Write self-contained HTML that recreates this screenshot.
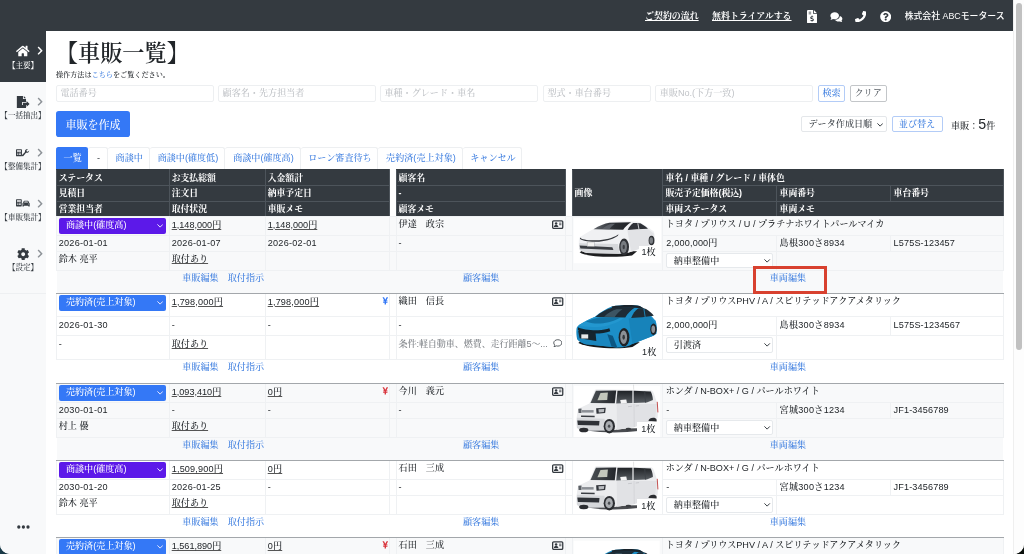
<!DOCTYPE html><html lang="ja"><head><meta charset="utf-8"><title>車販一覧</title><style>
*{box-sizing:border-box;margin:0;padding:0}
html,body{width:1024px;height:554px;overflow:hidden;background:linear-gradient(to right,#1a3b49 0,#0d1a1c 40px,#0b100c 100%)}
body{font-family:"Liberation Sans","Noto Serif CJK SC",serif;color:#212529;font-size:9.1px;line-height:1.5;position:relative;font-weight:500}
#win{position:absolute;left:0;top:0;width:1024px;height:554px;background:#fff;border-radius:0 0 10px 10px;overflow:hidden;will-change:transform}
#topbar{position:absolute;left:0;top:0;width:1013.3px;height:30.6px;background:#343a40}
#topbar a{position:absolute;top:9px;line-height:14px;color:#fff;font-weight:700;text-decoration:underline;text-decoration-thickness:.7px;text-underline-offset:1px;white-space:nowrap;font-size:8.95px}
#topbar .co{position:absolute;top:9px;line-height:14px;color:#fff;font-family:"Liberation Sans","Noto Sans CJK JP",sans-serif;font-size:8.85px;white-space:nowrap}
#topbar svg{position:absolute;fill:#fff}
#side{position:absolute;left:0;top:30.6px;width:46px;height:523px;background:#f8f9fa}
#side .it{position:absolute;left:0;width:46px;height:51px;text-align:center;color:#343a40}
#side .it.act{background:#343a40;color:#fff}
#side .it svg{position:absolute;fill:currentColor}
#side .it svg.ch{fill:#8d9297}
#side .it.act svg.ch{fill:#fff}
#side .it .lb{position:absolute;left:-10px;width:66px;text-align:center;font-size:7.55px;line-height:10px;white-space:nowrap}
#sb{position:absolute;left:1013.3px;top:0;width:10.7px;height:554px;background:#fdfdfd;border-left:1px solid #efefef}
#sb i{position:absolute;left:2px;top:2.5px;width:5.9px;height:347.5px;border-radius:3.2px;background:#c1c1c1}
h1{position:absolute;left:55.8px;top:37.4px;font-size:22.2px;font-weight:600;line-height:34px;white-space:nowrap;color:#212529}
.sub{position:absolute;left:56px;top:69.7px;font-size:7.13px;line-height:11px;white-space:nowrap;font-weight:500}
.sub a{color:#3f7fe0;text-decoration:none}
.inp{position:absolute;top:85.1px;height:17.1px;border:1px solid #edeff1;border-radius:2px;background:#fff;font-size:9.1px;line-height:14.8px;color:#c0c3c7;padding-left:3.4px;white-space:nowrap;overflow:hidden}
.btn{position:absolute;border-radius:2px;text-align:center;white-space:nowrap}
.tabs{position:absolute;left:56px;top:147px;height:22.5px;display:flex}
.tabs div{height:22.5px;line-height:20.2px;padding:0 0 0 2.4px;color:#3f7fe0;border:1px solid #edeff1;border-bottom:none;border-left:none;border-radius:2.5px 2.5px 0 0;text-align:center;font-size:9.1px;white-space:nowrap}
.tabs div.act{background:#3478f6;color:#fff;border-color:#3478f6}
table{position:absolute;left:56px;top:169px;width:947px;border-collapse:collapse;table-layout:fixed;font-size:9.1px;font-weight:500}
td,th{padding:0 1.7px;white-space:nowrap;overflow:hidden;text-align:left;vertical-align:top;line-height:13.6px}
thead th{font-size:8.85px;background:#343a40;color:#fff;font-weight:700;border:1px solid #4d545b;height:15.5px;line-height:14px;vertical-align:middle}
thead th.gap{background:#fff;border:none}
thead tr:first-child th{border-top-color:#343a40;height:16px}
tbody td{border:1px solid #eff1f3}
tbody.o td{background:#f8f9fa}
tbody.e td{background:#fff}
tbody tr.r1 td{border-top:1px solid #a3a7ab}
tbody tr.r4 td{border-bottom:1px solid #a3a7ab}
.n{letter-spacing:.27px}
.cn{letter-spacing:0}
tbody.first tr.r1 td{border-top-color:#eff1f3}
thead tr:last-child th,thead th[rowspan]{border-bottom-color:#eff1f3}
tbody td.lk{text-align:center;border-left:none;border-right:none;color:#3f7fe0;vertical-align:top;padding-top:1.5px}
tbody td.gapc{border-left:none;border-right:none}
td u{text-decoration:underline;text-decoration-color:#555;text-decoration-thickness:.6px;text-underline-offset:.7px}
.sel{display:block;position:relative;width:107.3px;height:16px;border-radius:2px;color:#fff;line-height:15px;padding-left:7.2px;margin-top:1px;font-weight:500}
.sel svg{position:absolute;right:2.6px;top:6.2px}
.sel2{display:block;position:relative;width:107.4px;height:15.5px;border-radius:2px;color:#212529;background:#fff;border:1px solid #e6e9ec;line-height:14.3px;padding-left:6.8px;margin:0.5px 0 0 3.3px}
.sel2 svg{position:absolute;right:1.8px;top:5px}
.ic{position:absolute}
td.rel{position:relative}
td.imgc{position:relative;padding:0;overflow:visible}
.car{position:absolute;left:-1.5px}
.bd{position:absolute;background:#fff;text-align:center;font-size:9.1px;white-space:nowrap}
.memo{color:#7d8186;letter-spacing:-.13px}
.red{position:absolute;left:752.8px;top:266px;width:74.4px;height:27.8px;border:3.5px solid #d8412f}
</style></head><body><div id="win"><div id="topbar"><a style="left:645px">ご契約の流れ</a><a style="left:712px">無料トライアルする</a><svg style="left:806.500px;top:10px" width="10" height="13.300" viewBox="0 0 12 16"><path fill-rule="evenodd" d="M1.200 0 h6 v3.600 a1.200 1.200 0 0 0 1.200 1.200 h3.600 v10 a1.200 1.200 0 0 1 -1.200 1.200 h-9.600 a1.200 1.200 0 0 1 -1.200 -1.200 v-13.600 a1.200 1.200 0 0 1 1.200 -1.200z M8.200 0 l3.800 3.800 h-3.800z M2 2.200 v0.800 h3 v-0.800z M2 4.200 v0.800 h3 v-0.800z M5.600 6.600 v0.900 c-1 0.100 -1.700 0.800 -1.700 1.700 c0 1 0.800 1.400 1.800 1.700 c0.900 0.300 1.200 0.400 1.200 0.800 c0 0.400 -0.400 0.600 -0.900 0.600 c-0.600 0 -1 -0.200 -1.400 -0.500 l-0.600 0.800 c0.400 0.400 1 0.600 1.600 0.700 v0.900 h0.900 v-0.900 c1.100 -0.200 1.700 -0.800 1.700 -1.700 c0 -1.100 -0.900 -1.500 -1.900 -1.800 c-0.800 -0.200 -1.100 -0.400 -1.100 -0.700 c0 -0.300 0.300 -0.500 0.800 -0.500 c0.400 0 0.800 0.100 1.200 0.400 l0.500 -0.800 c-0.400 -0.300 -0.800 -0.500 -1.200 -0.600 v-0.900z"/></svg><svg style="left:830px;top:11.500px" width="12.500" height="10" viewBox="0 0 20 16"><path d="M7.500 0.500 c3.800 0 6.900 2.500 6.900 5.500 s-3.100 5.500 -6.900 5.500 c-0.900 0 -1.800 -0.100 -2.600 -0.400 c-0.900 0.700 -2.400 1.400 -4.300 1.400 c0.600 -0.600 1.400 -1.700 1.600 -2.800 c-1 -1 -1.600 -2.300 -1.600 -3.700 c0 -3 3.100 -5.500 6.900 -5.500z"/><path d="M15.800 6.200 c2.300 0.700 4 2.500 4 4.600 c0 1.200 -0.500 2.300 -1.400 3.100 c0.200 0.900 0.800 1.800 1.400 2.300 c-1.700 0 -3 -0.600 -3.800 -1.200 c-0.700 0.200 -1.500 0.300 -2.300 0.300 c-2.600 0 -4.800 -1.200 -5.700 -2.900 c4.300 -0.100 7.800 -2.700 7.800 -6.200z"/></svg><svg style="left:854.5px;top:10.8px" width="11.4" height="11.4" viewBox="0 0 512 512" ><path d="M493.4 24.6l-104-24c-11.3-2.6-22.9 3.3-27.5 13.9l-48 112c-4.2 9.8-1.4 21.3 6.9 28l60.6 49.6c-36 76.7-98.900 140.500-177.200 177.200l-49.600-60.600c-6.800-8.300-18.200-11.100-28-6.900l-112 48C3.900 366.500-2 378.100.6 389.400l24 104C27.100 504.200 36.700 512 48 512c256.100 0 464-207.500 464-464 0-11.200-7.700-20.900-18.600-23.400z"/></svg><svg style="left:879.6px;top:10.8px" width="11.4" height="11.4" viewBox="0 0 512 512" ><path d="M504 256c0 136.997-111.043 248-248 248S8 392.997 8 256C8 119.083 119.043 8 256 8s248 111.083 248 248zM262.655 90c-54.497 0-89.255 22.957-116.549 63.758-3.536 5.286-2.353 12.415 2.715 16.258l34.699 26.310c5.205 3.947 12.621 3.008 16.665-2.122 17.864-22.658 30.113-35.797 57.303-35.797 20.429 0 45.698 13.148 45.698 32.958 0 14.976-12.363 22.667-32.534 33.976C247.128 238.528 216 254.941 216 296v4c0 6.627 5.373 12 12 12h56c6.627 0 12-5.373 12-12v-1.333c0-28.462 83.186-29.647 83.186-106.667 0-58.002-60.165-102-116.531-102zM256 338c-25.365 0-46 20.635-46 46 0 25.364 20.635 46 46 46s46-20.636 46-46c0-25.365-20.635-46-46-46z"/></svg><span class="co" style="left:904.700px">株式会社 ABCモータース</span></div><div id="side"><div class="it act" style="top:0px"><svg style="left:16.2px;top:14.6px" width="13.6" height="12.1" viewBox="0 0 576 512" ><path d="M280.37 148.26L96 300.11V464a16 16 0 0 0 16 16l112.06-.29a16 16 0 0 0 15.92-16V368a16 16 0 0 1 16-16h64a16 16 0 0 1 16 16v95.64a16 16 0 0 0 16 16.05L464 480a16 16 0 0 0 16-16V300L295.67 148.26a12.19 12.19 0 0 0-15.3 0zM571.6 251.47L488 182.56V44.05a12 12 0 0 0-12-12h-56a12 12 0 0 0-12 12v72.61L318.47 43a48 48 0 0 0-61 0L4.34 251.47a12 12 0 0 0-1.6 16.9l25.5 31A12 12 0 0 0 45.15 301l235.22-193.74a12.19 12.19 0 0 1 15.3 0L530.9 301a12 12 0 0 0 16.9-1.6l25.5-31a12 12 0 0 0-1.7-16.93z"/></svg><svg class="ch" style="left:36.600px;top:15.900px" width="6.300" height="9.400" viewBox="0 0 320 512"><path d="M285.476 272.971L91.132 467.314c-9.373 9.373-24.569 9.373-33.941 0l-22.667-22.667c-9.357-9.357-9.375-24.522-.04-33.901L188.505 256 34.484 101.255c-9.335-9.379-9.317-24.544.04-33.901l22.667-22.667c9.373-9.373 24.569-9.373 33.941 0L285.475 239.03c9.373 9.372 9.373 24.568.001 33.941z"/></svg><div class="lb" style="top:30px">【主要】</div></div><div class="it" style="top:50.7px"><svg style="left:16.1px;top:14.9px" width="13.6" height="11.900" viewBox="0 0 16 14"><path d="M1 0 h7.200 l0 3.600 h3.600 v3.400 h-4.600 v3.600 h4.600 v3.400 h-10.800z M9.200 0 l2.600 2.600 h-2.600z M8.200 8 h4.300 v-2 l3.500 3.300 -3.500 3.300 v-2 h-4.300z"/></svg><svg class="ch" style="left:36.600px;top:15.900px" width="6.300" height="9.400" viewBox="0 0 320 512"><path d="M285.476 272.971L91.132 467.314c-9.373 9.373-24.569 9.373-33.941 0l-22.667-22.667c-9.357-9.357-9.375-24.522-.04-33.901L188.505 256 34.484 101.255c-9.335-9.379-9.317-24.544.04-33.901l22.667-22.667c9.373-9.373 24.569-9.373 33.941 0L285.475 239.03c9.373 9.372 9.373 24.568.001 33.941z"/></svg><div class="lb" style="top:30px">【一括抽出】</div></div><div class="it" style="top:101.4px"><svg style="left:16.4px;top:17.2px" width="13.400" height="7.500" preserveAspectRatio="none" viewBox="0 0 18 10.700"><path fill-rule="evenodd" d="M0.800 0.500 h6.400 a0.800 0.800 0 0 1 0.800 0.800 v8.400 a0.800 0.800 0 0 1 -0.800 0.800 h-6.400 a0.800 0.800 0 0 1 -0.800 -0.800 v-8.400 a0.800 0.800 0 0 1 0.800 -0.800z M1.300 1.800 v2.200 h5.400 v-2.200z M1.300 5.300 v1 h1.200 v-1z M3.500 5.300 v1 h3.200 v-1z M1.300 7.400 v1 h1.200 v-1z M3.500 7.400 v1 h3.200 v-1z"/><path d="M17.800 2.200 a3.300 3.300 0 0 1 -4.300 3.100 l-3.600 4.600 a1.100 1.100 0 0 1 -1.700 -1.400 l3.900 -4.300 a3.300 3.300 0 0 1 3.800 -4 l-1.900 2 0.400 1.500 1.500 0.400z"/></svg><svg class="ch" style="left:36.600px;top:15.900px" width="6.300" height="9.400" viewBox="0 0 320 512"><path d="M285.476 272.971L91.132 467.314c-9.373 9.373-24.569 9.373-33.941 0l-22.667-22.667c-9.357-9.357-9.375-24.522-.04-33.901L188.505 256 34.484 101.255c-9.335-9.379-9.317-24.544.04-33.901l22.667-22.667c9.373-9.373 24.569-9.373 33.941 0L285.475 239.03c9.373 9.372 9.373 24.568.001 33.941z"/></svg><div class="lb" style="top:30px">【整備集計】</div></div><div class="it" style="top:152.1px"><svg style="left:16.2px;top:16.8px" width="13.700" height="7.700" preserveAspectRatio="none" viewBox="0 0 19 10.900"><path fill-rule="evenodd" d="M0.800 0.500 h6.400 a0.800 0.800 0 0 1 0.800 0.800 v8.400 a0.800 0.800 0 0 1 -0.800 0.800 h-6.400 a0.800 0.800 0 0 1 -0.800 -0.800 v-8.400 a0.800 0.800 0 0 1 0.800 -0.800z M1.300 1.800 v2.200 h5.400 v-2.200z M1.300 5.300 v1 h1.200 v-1z M3.500 5.300 v1 h3.200 v-1z M1.300 7.400 v1 h1.200 v-1z M3.500 7.400 v1 h3.200 v-1z"/><path fill-rule="evenodd" d="M10.600 3.200 a1.200 1.200 0 0 1 1.100 -0.800 h4.600 a1.200 1.200 0 0 1 1.100 0.800 l0.700 2 a1.300 1.300 0 0 1 0.900 1.200 v3.800 a0.500 0.500 0 0 1 -0.500 0.500 h-0.900 a0.500 0.500 0 0 1 -0.500 -0.500 v-0.700 h-6.200 v0.700 a0.500 0.500 0 0 1 -0.500 0.500 h-0.900 a0.500 0.500 0 0 1 -0.500 -0.500 v-3.800 a1.300 1.300 0 0 1 0.900 -1.200z M11.800 3.600 l-0.500 1.500 h5.400 l-0.500 -1.500z M10.900 6.300 a0.700 0.700 0 1 0 0 1.400 a0.700 0.700 0 0 0 0 -1.400z M17.100 6.300 a0.700 0.700 0 1 0 0 1.400 a0.700 0.700 0 0 0 0 -1.400z"/></svg><svg class="ch" style="left:36.600px;top:15.900px" width="6.300" height="9.400" viewBox="0 0 320 512"><path d="M285.476 272.971L91.132 467.314c-9.373 9.373-24.569 9.373-33.941 0l-22.667-22.667c-9.357-9.357-9.375-24.522-.04-33.901L188.505 256 34.484 101.255c-9.335-9.379-9.317-24.544.04-33.901l22.667-22.667c9.373-9.373 24.569-9.373 33.941 0L285.475 239.03c9.373 9.372 9.373 24.568.001 33.941z"/></svg><div class="lb" style="top:30px">【車販集計】</div></div><div class="it" style="top:202.8px"><svg style="left:16.9px;top:14.6px" width="12.4" height="12.4" viewBox="0 0 512 512" ><path d="M487.4 315.7l-42.600-24.600c4.300-23.200 4.300-47 0-70.200l42.600-24.600c4.900-2.800 7.100-8.600 5.500-14-11.100-35.600-30-67.800-54.700-94.600-3.800-4.100-10-5.100-14.800-2.300L380.800 110c-17.900-15.400-38.500-27.300-60.800-35.100V25.800c0-5.600-3.900-10.500-9.400-11.700-36.700-8.200-74.300-7.800-109.200 0-5.500 1.200-9.400 6.100-9.400 11.700V75c-22.200 7.900-42.800 19.800-60.800 35.100L88.700 85.500c-4.900-2.800-11-1.900-14.800 2.300-24.700 26.700-43.600 58.900-54.700 94.600-1.700 5.400.6 11.200 5.500 14L67.300 221c-4.300 23.200-4.300 47 0 70.200l-42.600 24.600c-4.900 2.800-7.100 8.600-5.500 14 11.100 35.600 30 67.800 54.700 94.600 3.800 4.100 10 5.100 14.800 2.300l42.600-24.600c17.900 15.400 38.500 27.300 60.800 35.100v49.200c0 5.600 3.900 10.500 9.400 11.700 36.700 8.200 74.300 7.800 109.200 0 5.500-1.200 9.400-6.100 9.400-11.700v-49.200c22.200-7.900 42.800-19.800 60.800-35.100l42.600 24.600c4.900 2.800 11 1.900 14.800-2.300 24.700-26.700 43.600-58.900 54.700-94.600 1.500-5.500-.7-11.300-5.600-14.100zM256 336c-44.100 0-80-35.900-80-80s35.900-80 80-80 80 35.900 80 80-35.900 80-80 80z"/></svg><svg class="ch" style="left:36.600px;top:15.900px" width="6.300" height="9.400" viewBox="0 0 320 512"><path d="M285.476 272.971L91.132 467.314c-9.373 9.373-24.569 9.373-33.941 0l-22.667-22.667c-9.357-9.357-9.375-24.522-.04-33.901L188.505 256 34.484 101.255c-9.335-9.379-9.317-24.544.04-33.901l22.667-22.667c9.373-9.373 24.569-9.373 33.941 0L285.475 239.03c9.373 9.372 9.373 24.568.001 33.941z"/></svg><div class="lb" style="top:30px">【設定】</div></div><svg style="position:absolute;left:16.500px;top:494px" width="13" height="4" viewBox="0 0 13 4"><circle cx="1.800" cy="2" r="1.650" fill="#343a40"/><circle cx="6.400" cy="2" r="1.650" fill="#343a40"/><circle cx="11" cy="2" r="1.650" fill="#343a40"/></svg><div style="position:absolute;left:0;top:262px;width:46px;height:1px;background:#eef0f2"></div></div><div id="sb"><i></i></div><h1>【車販一覧】</h1><div class="sub">操作方法は<a>こちら</a>をご覧ください。</div><div class="inp" style="left:56px;width:157.5px">電話番号</div><div class="inp" style="left:218.2px;width:158.3px">顧客名・先方担当者</div><div class="inp" style="left:380px;width:158px">車種・グレード・車名</div><div class="inp" style="left:543px;width:107.5px">型式・車台番号</div><div class="inp" style="left:655.3px;width:158.2px">車販No.(下方一致)</div><div class="btn" style="left:817.600px;top:85.200px;width:27.900px;height:16.800px;line-height:14.600px;border:1px solid #b3ccf7;color:#3f7fe0;font-size:9.100px">検索</div><div class="btn" style="left:849.500px;top:85.200px;width:37.200px;height:16.800px;line-height:14.600px;border:1px solid #c3c6c9;color:#60666c;font-size:9.100px">クリア</div><div class="btn" style="left:56px;top:111px;width:74px;height:26.300px;line-height:28.200px;background:#3478f6;color:#fff;font-size:11px;border-radius:2.800px;font-weight:500">車販を作成</div><div class="btn" style="left:801px;top:115.700px;width:85.700px;height:16.700px;line-height:15px;border:1px solid #e4e7ea;color:#343a40;font-size:9.100px;text-align:left;padding-left:6.500px">データ作成日順<span style="position:absolute;right:2.600px;top:0"><svg width="6.300" height="4" viewBox="0 0 14 9"><path d="M1.500 1.500 L7 7 L12.500 1.500" fill="none" stroke="#343a40" stroke-width="2.200" stroke-linecap="round" stroke-linejoin="round"/></svg></span></div><div class="btn" style="left:891.500px;top:115.700px;width:51px;height:16.700px;line-height:15px;border:1px solid #b3ccf7;color:#3f7fe0;font-size:9.100px">並び替え</div><div style="position:absolute;left:951px;top:114px;line-height:20px;white-space:nowrap;font-size:9.100px">車販：<span style="font-size:14.200px">5</span>件</div><div class="tabs"><div style="width:32px" class="act">一覧</div><div style="width:19.5px"><span style="color:#343a40">-</span></div><div style="width:42px">商談中</div><div style="width:75.5px">商談中(確度低)</div><div style="width:75.5px">商談中(確度高)</div><div style="width:77.5px">ローン審査待ち</div><div style="width:84.5px">売約済(売上対象)</div><div style="width:59.5px">キャンセル</div></div><table><colgroup><col style="width:113px"><col style="width:96px"><col style="width:124.4px"><col style="width:6.5px"><col style="width:169.5px"><col style="width:6.5px"><col style="width:89.8px"><col style="width:114.2px"><col style="width:114px"><col style="width:113.1px"></colgroup><thead><tr><th>ステータス</th><th>お支払総額</th><th>入金額計</th><th class="gap"></th><th>顧客名</th><th class="gap"></th><th rowspan="3">画像</th><th colspan="3" style="padding-left:2.700px">車名 / 車種 / グレード / 車体色</th></tr><tr><th>見積日</th><th>注文日</th><th>納車予定日</th><th class="gap"></th><th>-</th><th class="gap"></th><th style="padding-left:2.700px">販売予定価格(税込)</th><th style="padding-left:2.700px">車両番号</th><th style="padding-left:2.700px">車台番号</th></tr><tr><th>営業担当者</th><th>取付状況</th><th>車販メモ</th><th class="gap"></th><th>顧客メモ</th><th class="gap"></th><th style="padding-left:2.700px">車両ステータス</th><th colspan="2" style="padding-left:2.700px">車両メモ</th></tr></thead><tbody class="o first"><tr class="r1" style="height:19px"><td style="padding-left:1.7px"><span class="sel" style="background:#5c19e9">商談中(確度高)<svg width="6.300" height="4" viewBox="0 0 14 9"><path d="M1.500 1.500 L7 7 L12.500 1.500" fill="none" stroke="#e8e8ff" stroke-width="2.200" stroke-linecap="round" stroke-linejoin="round"/></svg></span></td><td style="padding-top:1.5px"><u>1,148,000円</u></td><td class="rel" style="padding-top:1.5px"><u>1,148,000円</u></td><td class="gapc"></td><td class="rel" style="padding-top:1.1px">伊達　政宗<svg class="ic" style="right:1.700px;top:3.0px" width="11.400" height="9.200" viewBox="0 0 23 18"><rect x="1.300" y="1.300" width="20.400" height="15.400" rx="2.200" fill="none" stroke="#343a40" stroke-width="2.600"/><circle cx="8.300" cy="6.800" r="2.500" fill="#343a40"/><path d="M3.800 14 c0 -2.900 1.900 -4 4.500 -4 s4.500 1.100 4.500 4z" fill="#343a40"/><rect x="14.300" y="5.200" width="4.700" height="1.700" fill="#343a40"/><rect x="14.300" y="8.500" width="4.700" height="1.700" fill="#343a40"/></svg></td><td class="gapc"></td><td class="imgc" rowspan="3"><span class="car" style="top:-2px"><svg width="96" height="52" viewBox="0 0 1023 554" style="display:block"><rect x="28" y="34" width="930" height="480" fill="#fff"/><path d="M92 398 C150 448 480 458 650 432 L704 385 L120 380Z" fill="#1d1e20"/><path d="M84 262 C86 246 92 238 104 230 C150 200 200 170 236 152 C300 112 360 84 410 76 C500 64 640 62 716 72 C780 100 850 150 884 178 C896 215 898 262 890 300 L870 312 L640 392 C600 410 540 418 500 412 L170 404 C130 396 100 380 88 362 C82 330 82 290 84 262Z" fill="#f0f1f3"/><path d="M88 300 L500 310 L520 412 L170 404 C130 396 100 380 88 362Z" fill="#d6d8db"/><path d="M600 160 L640 392 L870 312 L884 200 L820 150Z" fill="#e2e3e6"/><defs><linearGradient id="wpw" x1="0" y1="0" x2="1" y2="0"><stop offset="0" stop-color="#62666c"/><stop offset=".55" stop-color="#2b2e33"/><stop offset="1" stop-color="#1f2226"/></linearGradient></defs><path d="M240 152 C300 114 360 88 410 82 L640 78 C600 104 575 130 556 156Z" fill="url(#wpw)"/><path d="M330 150 C360 120 400 100 430 92 L470 92 C440 112 420 132 410 152Z" fill="#5b5f66"/><path d="M604 160 C618 130 640 100 664 86 C700 82 730 84 744 90 C780 110 805 128 820 146 L700 152Z" fill="#2e3137"/><path d="M712 88 L724 150" stroke="#e9eaec" stroke-width="9"/><path d="M96 240 C110 262 200 276 300 268 C400 258 470 232 506 204 L500 222 C460 252 390 276 300 284 C200 290 120 276 96 256Z" fill="#33363b"/><path d="M92 326 L440 344 L452 372 L100 356Z" fill="#3a3d42"/><rect x="172" y="288" width="76" height="46" fill="#f2f2f0" stroke="#9a9da2" stroke-width="4"/><ellipse cx="566" cy="340" rx="52" ry="90" fill="#303236"/><ellipse cx="562" cy="340" rx="34" ry="66" fill="#777b80"/><ellipse cx="562" cy="340" rx="12" ry="24" fill="#3c3e42"/><ellipse cx="858" cy="272" rx="31" ry="50" fill="#303236"/><ellipse cx="855" cy="272" rx="19" ry="34" fill="#7b7f84"/></svg></span><span class="bd" style="left:65.7px;top:29.2px;width:19.8px;height:11.7px;line-height:12.2px">1枚</span></td><td colspan="3" class="cn" style="padding-left:3px;padding-top:1.0px">トヨタ / プリウス / U / プラチナホワイトパールマイカ</td></tr><tr style="height:15.5px"><td style="padding-top:1px"><span style="letter-spacing:0.27px">2026-01-01</span></td><td style="padding-top:1px"><span style="letter-spacing:0.27px">2026-01-07</span></td><td style="padding-top:1px"><span style="letter-spacing:0.27px">2026-02-01</span></td><td class="gapc"></td><td style="padding-top:1px">-</td><td class="gapc"></td><td style="padding-left:3.600px;padding-top:1px"><span style="letter-spacing:0.18px">2,000,000円</span></td><td style="padding-left:2.700px;padding-top:1px"><span style="letter-spacing:0.27px">島根300さ8934</span></td><td style="padding-left:2.700px;padding-top:1px"><span style="letter-spacing:0.15px">L575S-123457</span></td></tr><tr style="height:19.5px"><td style="padding-top:1.4px">鈴木 亮平</td><td style="padding-top:1.4px"><u>取付あり</u></td><td></td><td class="gapc"></td><td class="rel" style="padding-top:1.4px"></td><td class="gapc"></td><td style="padding:0.8px 0 0 0"><span class="sel2">納車整備中<svg width="6.300" height="4" viewBox="0 0 14 9"><path d="M1.500 1.500 L7 7 L12.500 1.500" fill="none" stroke="#343a40" stroke-width="2.200" stroke-linecap="round" stroke-linejoin="round"/></svg></span></td><td colspan="2"></td></tr><tr class="r4" style="height:23px"><td class="lk" style="padding-top:0.7px" colspan="3">車販編集　取付指示</td><td class="lk"></td><td class="lk" style="padding-top:0.7px">顧客編集</td><td class="lk"></td><td class="lk" style="padding-top:0.7px" colspan="4">車両編集</td></tr></tbody><tbody class="e"><tr class="r1" style="height:23px"><td style="padding-left:1.7px"><span class="sel" style="background:#3478f6">売約済(売上対象)<svg width="6.300" height="4" viewBox="0 0 14 9"><path d="M1.500 1.500 L7 7 L12.500 1.500" fill="none" stroke="#e8e8ff" stroke-width="2.200" stroke-linecap="round" stroke-linejoin="round"/></svg></span></td><td style="padding-top:1.5px"><u><span style="letter-spacing:0.18px">1,798,000円</span></u></td><td class="rel" style="padding-top:1.5px"><u><span style="letter-spacing:0.18px">1,798,000円</span></u><svg class="ic" style="right:1.300px;top:2.8px" width="6.600" height="7.700" viewBox="0 0 13 17"><path d="M0.300 0.500 h3.300 l2.900 5.800 l2.900 -5.800 h3.300 l-3.700 7 h2.300 v1.900 h-3.300 v1.300 h3.300 v1.900 h-3.300 v3.900 h-3 v-3.900 h-3.300 v-1.900 h3.300 v-1.300 h-3.300 v-1.900 h2.300z" fill="#3478f6"/></svg></td><td class="gapc"></td><td class="rel" style="padding-top:1.1px">織田　信長<svg class="ic" style="right:1.700px;top:3.0px" width="11.400" height="9.200" viewBox="0 0 23 18"><rect x="1.300" y="1.300" width="20.400" height="15.400" rx="2.200" fill="none" stroke="#343a40" stroke-width="2.600"/><circle cx="8.300" cy="6.800" r="2.500" fill="#343a40"/><path d="M3.800 14 c0 -2.900 1.900 -4 4.500 -4 s4.500 1.100 4.500 4z" fill="#343a40"/><rect x="14.300" y="5.200" width="4.700" height="1.700" fill="#343a40"/><rect x="14.300" y="8.500" width="4.700" height="1.700" fill="#343a40"/></svg></td><td class="gapc"></td><td class="imgc" rowspan="3"><span class="car" style="top:-1.5px"><svg width="96" height="68" viewBox="0 0 782 554" style="display:block"><rect x="22" y="30" width="700" height="490" fill="#fff"/><g transform="translate(0,11)"><path d="M60 396 C140 436 380 452 500 428 L560 390 L80 376Z" fill="#15181b"/><path d="M44 290 C44 272 50 262 62 252 C100 226 150 200 192 184 C240 146 290 116 332 100 C400 86 500 84 560 94 C610 126 660 180 690 216 C700 250 702 290 696 322 L676 336 L500 404 C470 424 420 436 380 432 L120 406 C90 398 60 382 50 364 C44 340 42 310 44 290Z" fill="#1c8fc8"/><path d="M62 252 C100 226 150 200 192 184 L440 186 C400 220 330 250 260 262 C180 270 100 266 62 252Z" fill="#2397cf"/><path d="M120 222 C160 204 200 192 240 188 L400 190 C360 214 300 232 240 238 C190 240 150 234 120 222Z" fill="#1273a6"/><path d="M50 300 L300 318 L330 340 L380 432 L120 406 C90 398 60 382 50 364Z" fill="#1a86be"/><path d="M470 196 L500 404 L676 336 L692 240 L640 176Z" fill="#1783ba"/><path d="M332 100 C400 86 500 84 560 94 L600 118 L520 110 L334 112Z" fill="#1a242c"/><path d="M198 184 C246 146 292 120 334 110 L524 106 C486 130 462 158 442 188Z" fill="#1e2c36"/><path d="M270 182 C300 152 340 130 372 122 L420 122 C390 142 370 162 356 184Z" fill="#3c5563"/><path d="M490 192 C504 160 524 130 546 116 C572 112 598 114 612 120 C642 140 662 158 674 174 L580 186Z" fill="#1f2c36"/><path d="M594 118 L604 184" stroke="#1c8fc8" stroke-width="7"/><path d="M56 268 C90 286 160 294 220 292 C260 290 290 284 312 276 L320 300 C280 316 220 322 160 318 C110 314 70 304 56 290Z" fill="#14232c"/><path d="M58 296 L200 314 L206 380 L70 358Z" fill="#16242d"/><rect x="84" y="326" width="56" height="34" fill="#e8eaea"/><path d="M296 326 L330 424 L376 430 L340 338Z" fill="#0c5783"/><ellipse cx="432" cy="350" rx="44" ry="75" fill="#202327"/><ellipse cx="429" cy="350" rx="28" ry="55" fill="#8b9096"/><ellipse cx="429" cy="350" rx="10" ry="20" fill="#33373b"/><ellipse cx="672" cy="284" rx="26" ry="47" fill="#202327"/><ellipse cx="670" cy="284" rx="15" ry="30" fill="#8b9096"/></g></svg></span><span class="bd" style="left:66.4px;top:51.8px;width:19.8px;height:11.7px;line-height:12.2px">1枚</span></td><td colspan="3" class="cn" style="padding-left:3px;padding-top:1.0px">トヨタ / プリウスPHV / A / スピリテッドアクアメタリック</td></tr><tr style="height:19px"><td style="padding-top:1.5px"><span style="letter-spacing:0.27px">2026-01-30</span></td><td style="padding-top:1.5px">-</td><td style="padding-top:1.5px">-</td><td class="gapc"></td><td style="padding-top:1.5px">-</td><td class="gapc"></td><td style="padding-left:3.600px;padding-top:1.5px"><span style="letter-spacing:0.18px">2,000,000円</span></td><td style="padding-left:2.700px;padding-top:1.5px"><span style="letter-spacing:0.27px">島根300さ8934</span></td><td style="padding-left:2.700px;padding-top:1.5px"><span style="letter-spacing:0.15px">L575S-1234567</span></td></tr><tr style="height:24px"><td style="padding-top:2.3px">-</td><td style="padding-top:2.3px"><u>取付あり</u></td><td></td><td class="gapc"></td><td class="rel" style="padding-top:2.3px"><span class="memo">条件:軽自動車、燃費、走行距離5〜...</span><svg class="ic" style="right:3px;top:2.8px" width="9.600" height="8.600" viewBox="0 0 20 18"><path d="M10 1.500 c4.700 0 8.500 3 8.500 6.700 s-3.800 6.700 -8.500 6.700 c-1.100 0 -2.200 -0.200 -3.200 -0.500 c-1 0.800 -2.700 1.700 -4.800 1.700 c0.900 -0.900 1.600 -2.200 1.800 -3.300 c-1.400 -1.200 -2.300 -2.800 -2.300 -4.600 c0 -3.700 3.800 -6.700 8.500 -6.700z" fill="none" stroke="#343a40" stroke-width="1.700"/></svg></td><td class="gapc"></td><td style="padding:0.8px 0 0 0"><span class="sel2">引渡済<svg width="6.300" height="4" viewBox="0 0 14 9"><path d="M1.500 1.500 L7 7 L12.500 1.500" fill="none" stroke="#343a40" stroke-width="2.200" stroke-linecap="round" stroke-linejoin="round"/></svg></span></td><td colspan="2"></td></tr><tr class="r4" style="height:24px"><td class="lk" style="padding-top:1.4px" colspan="3">車販編集　取付指示</td><td class="lk"></td><td class="lk" style="padding-top:1.4px">顧客編集</td><td class="lk"></td><td class="lk" style="padding-top:1.4px" colspan="4">車両編集</td></tr></tbody><tbody class="o"><tr class="r1" style="height:19px"><td style="padding-left:1.7px"><span class="sel" style="background:#3478f6">売約済(売上対象)<svg width="6.300" height="4" viewBox="0 0 14 9"><path d="M1.500 1.500 L7 7 L12.500 1.500" fill="none" stroke="#e8e8ff" stroke-width="2.200" stroke-linecap="round" stroke-linejoin="round"/></svg></span></td><td style="padding-top:1.5px"><u>1,093,410円</u></td><td class="rel" style="padding-top:1.5px"><u><span style="letter-spacing:0.18px">0円</span></u><svg class="ic" style="right:1.300px;top:2.8px" width="6.600" height="7.700" viewBox="0 0 13 17"><path d="M0.300 0.500 h3.300 l2.900 5.800 l2.900 -5.800 h3.300 l-3.700 7 h2.300 v1.900 h-3.300 v1.300 h3.300 v1.900 h-3.300 v3.900 h-3 v-3.900 h-3.300 v-1.900 h3.300 v-1.300 h-3.300 v-1.900 h2.300z" fill="#d9363e"/></svg></td><td class="gapc"></td><td class="rel" style="padding-top:1.1px">今川　義元<svg class="ic" style="right:1.700px;top:3.0px" width="11.400" height="9.200" viewBox="0 0 23 18"><rect x="1.300" y="1.300" width="20.400" height="15.400" rx="2.200" fill="none" stroke="#343a40" stroke-width="2.600"/><circle cx="8.300" cy="6.800" r="2.500" fill="#343a40"/><path d="M3.800 14 c0 -2.900 1.900 -4 4.500 -4 s4.500 1.100 4.500 4z" fill="#343a40"/><rect x="14.300" y="5.200" width="4.700" height="1.700" fill="#343a40"/><rect x="14.300" y="8.500" width="4.700" height="1.700" fill="#343a40"/></svg></td><td class="gapc"></td><td class="imgc" rowspan="3"><span class="car" style="top:-2px"><svg width="96" height="58" viewBox="0 0 917 554" style="display:block"><rect x="28" y="36" width="822" height="490" fill="#fff"/><g transform="translate(0,7) scale(1,1.012)"><path d="M150 452 C300 476 520 474 640 456 L640 430 L150 436Z" fill="#4a4c50"/><path d="M597 18 L599 66" stroke="#999" stroke-width="2.500"/><path d="M228 70 C232 64 240 62 252 62 L760 70 C776 72 784 80 790 96 L826 200 C832 240 832 300 826 336 L800 350 L600 420 L420 446 L130 452 C90 450 62 438 56 420 C50 380 52 330 60 290 C62 260 70 246 84 238 L176 196Z" fill="#ebecee"/><path d="M56 330 L320 340 L336 450 L130 452 C90 450 62 438 56 420Z" fill="#d6d8db"/><path d="M436 200 L440 444 L600 420 L800 350 L822 200Z" fill="#e1e2e5"/><defs><linearGradient id="nbw" x1="0" y1="0" x2="1" y2="0"><stop offset="0" stop-color="#4a4f53"/><stop offset="1" stop-color="#23262b"/></linearGradient><linearGradient id="nbs" x1="0" y1="0" x2="0" y2="1"><stop offset="0" stop-color="#1f2226"/><stop offset="1" stop-color="#595e63"/></linearGradient></defs><path d="M186 192 L238 76 L432 74 L418 194Z" fill="url(#nbw)"/><path d="M252 166 L282 96 L352 92 L346 164Z" fill="#c3c7bc"/><path d="M444 76 L586 76 L586 192 L432 196Z" fill="url(#nbs)"/><path d="M598 76 L762 82 C776 110 782 140 782 162 L724 186 L598 192Z" fill="url(#nbs)"/><path d="M704 80 L712 188" stroke="#3d4148" stroke-width="8"/><path d="M470 164 L528 158 L534 192 L478 198Z" fill="#f4f4f5"/><path d="M240 240 L332 236 L326 286 L244 292Z" fill="#33363c"/><path d="M262 250 L318 248 L314 276 L266 280Z" fill="#b9bcc0"/><path d="M70 246 L100 244 L100 286 L72 286Z" fill="#5c6066"/><path d="M104 258 L216 258 L216 282 L104 282Z" fill="#8c9096"/><path d="M96 310 L226 312 L226 326 L96 324Z" fill="#3a3d42"/><path d="M60 356 L272 362 L268 404 L66 398Z" fill="#2f3237"/><ellipse cx="366" cy="410" rx="54" ry="68" fill="#2b2d31"/><ellipse cx="364" cy="410" rx="36" ry="48" fill="#a9acb0"/><ellipse cx="364" cy="410" rx="12" ry="16" fill="#4a4d52"/><ellipse cx="122" cy="446" rx="44" ry="22" fill="#2b2d31"/><path d="M740 362 C744 326 810 322 818 350 L818 366Z" fill="#2b2d31"/><ellipse cx="548" cy="438" rx="26" ry="12" fill="#3a3c40"/><path d="M602 196 L604 418" stroke="#c2c4c8" stroke-width="4"/><path d="M545 226 L582 222 M618 220 L650 216" stroke="#b9bbbf" stroke-width="6"/><path d="M824 180 L830 280" stroke="#b33" stroke-width="8"/></g></svg></span><span class="bd" style="left:64.5px;top:37.8px;width:22px;height:13.7px;line-height:14.2px">1枚</span></td><td colspan="3" class="cn" style="padding-left:3px;padding-top:1.0px">ホンダ / N-BOX+ / G / パールホワイト</td></tr><tr style="height:15.5px"><td style="padding-top:1px"><span style="letter-spacing:0.27px">2030-01-01</span></td><td style="padding-top:1px">-</td><td style="padding-top:1px">-</td><td class="gapc"></td><td style="padding-top:1px">-</td><td class="gapc"></td><td style="padding-left:3.600px;padding-top:1px">-</td><td style="padding-left:2.700px;padding-top:1px"><span style="letter-spacing:0.27px">宮城300さ1234</span></td><td style="padding-left:2.700px;padding-top:1px"><span style="letter-spacing:0.15px">JF1-3456789</span></td></tr><tr style="height:19.5px"><td style="padding-top:1.4px">村上 優</td><td style="padding-top:1.4px"><u>取付あり</u></td><td></td><td class="gapc"></td><td class="rel" style="padding-top:1.4px"></td><td class="gapc"></td><td style="padding:0.8px 0 0 0"><span class="sel2">納車整備中<svg width="6.300" height="4" viewBox="0 0 14 9"><path d="M1.500 1.500 L7 7 L12.500 1.500" fill="none" stroke="#343a40" stroke-width="2.200" stroke-linecap="round" stroke-linejoin="round"/></svg></span></td><td colspan="2"></td></tr><tr class="r4" style="height:23px"><td class="lk" style="padding-top:0.7px" colspan="3">車販編集　取付指示</td><td class="lk"></td><td class="lk" style="padding-top:0.7px">顧客編集</td><td class="lk"></td><td class="lk" style="padding-top:0.7px" colspan="4">車両編集</td></tr></tbody><tbody class="e"><tr class="r1" style="height:19px"><td style="padding-left:1.7px"><span class="sel" style="background:#5c19e9">商談中(確度高)<svg width="6.300" height="4" viewBox="0 0 14 9"><path d="M1.500 1.500 L7 7 L12.500 1.500" fill="none" stroke="#e8e8ff" stroke-width="2.200" stroke-linecap="round" stroke-linejoin="round"/></svg></span></td><td style="padding-top:1.5px"><u><span style="letter-spacing:0.18px">1,509,900円</span></u></td><td class="rel" style="padding-top:1.5px"><u><span style="letter-spacing:0.18px">0円</span></u></td><td class="gapc"></td><td class="rel" style="padding-top:1.1px">石田　三成<svg class="ic" style="right:1.700px;top:3.0px" width="11.400" height="9.200" viewBox="0 0 23 18"><rect x="1.300" y="1.300" width="20.400" height="15.400" rx="2.200" fill="none" stroke="#343a40" stroke-width="2.600"/><circle cx="8.300" cy="6.800" r="2.500" fill="#343a40"/><path d="M3.800 14 c0 -2.900 1.900 -4 4.500 -4 s4.500 1.100 4.500 4z" fill="#343a40"/><rect x="14.300" y="5.200" width="4.700" height="1.700" fill="#343a40"/><rect x="14.300" y="8.500" width="4.700" height="1.700" fill="#343a40"/></svg></td><td class="gapc"></td><td class="imgc" rowspan="3"><span class="car" style="top:-2px"><svg width="96" height="58" viewBox="0 0 917 554" style="display:block"><rect x="28" y="36" width="822" height="490" fill="#fff"/><g transform="translate(0,7) scale(1,1.012)"><path d="M150 452 C300 476 520 474 640 456 L640 430 L150 436Z" fill="#4a4c50"/><path d="M597 18 L599 66" stroke="#999" stroke-width="2.500"/><path d="M228 70 C232 64 240 62 252 62 L760 70 C776 72 784 80 790 96 L826 200 C832 240 832 300 826 336 L800 350 L600 420 L420 446 L130 452 C90 450 62 438 56 420 C50 380 52 330 60 290 C62 260 70 246 84 238 L176 196Z" fill="#ebecee"/><path d="M56 330 L320 340 L336 450 L130 452 C90 450 62 438 56 420Z" fill="#d6d8db"/><path d="M436 200 L440 444 L600 420 L800 350 L822 200Z" fill="#e1e2e5"/><defs><linearGradient id="nbw" x1="0" y1="0" x2="1" y2="0"><stop offset="0" stop-color="#4a4f53"/><stop offset="1" stop-color="#23262b"/></linearGradient><linearGradient id="nbs" x1="0" y1="0" x2="0" y2="1"><stop offset="0" stop-color="#1f2226"/><stop offset="1" stop-color="#595e63"/></linearGradient></defs><path d="M186 192 L238 76 L432 74 L418 194Z" fill="url(#nbw)"/><path d="M252 166 L282 96 L352 92 L346 164Z" fill="#c3c7bc"/><path d="M444 76 L586 76 L586 192 L432 196Z" fill="url(#nbs)"/><path d="M598 76 L762 82 C776 110 782 140 782 162 L724 186 L598 192Z" fill="url(#nbs)"/><path d="M704 80 L712 188" stroke="#3d4148" stroke-width="8"/><path d="M470 164 L528 158 L534 192 L478 198Z" fill="#f4f4f5"/><path d="M240 240 L332 236 L326 286 L244 292Z" fill="#33363c"/><path d="M262 250 L318 248 L314 276 L266 280Z" fill="#b9bcc0"/><path d="M70 246 L100 244 L100 286 L72 286Z" fill="#5c6066"/><path d="M104 258 L216 258 L216 282 L104 282Z" fill="#8c9096"/><path d="M96 310 L226 312 L226 326 L96 324Z" fill="#3a3d42"/><path d="M60 356 L272 362 L268 404 L66 398Z" fill="#2f3237"/><ellipse cx="366" cy="410" rx="54" ry="68" fill="#2b2d31"/><ellipse cx="364" cy="410" rx="36" ry="48" fill="#a9acb0"/><ellipse cx="364" cy="410" rx="12" ry="16" fill="#4a4d52"/><ellipse cx="122" cy="446" rx="44" ry="22" fill="#2b2d31"/><path d="M740 362 C744 326 810 322 818 350 L818 366Z" fill="#2b2d31"/><ellipse cx="548" cy="438" rx="26" ry="12" fill="#3a3c40"/><path d="M602 196 L604 418" stroke="#c2c4c8" stroke-width="4"/><path d="M545 226 L582 222 M618 220 L650 216" stroke="#b9bbbf" stroke-width="6"/><path d="M824 180 L830 280" stroke="#b33" stroke-width="8"/></g></svg></span><span class="bd" style="left:64.5px;top:37.8px;width:22px;height:13.7px;line-height:14.2px">1枚</span></td><td colspan="3" class="cn" style="padding-left:3px;padding-top:1.0px">ホンダ / N-BOX+ / G / パールホワイト</td></tr><tr style="height:15.5px"><td style="padding-top:1px"><span style="letter-spacing:0.27px">2030-01-20</span></td><td style="padding-top:1px"><span style="letter-spacing:0.27px">2026-01-25</span></td><td style="padding-top:1px">-</td><td class="gapc"></td><td style="padding-top:1px">-</td><td class="gapc"></td><td style="padding-left:3.600px;padding-top:1px">-</td><td style="padding-left:2.700px;padding-top:1px"><span style="letter-spacing:0.27px">宮城300さ1234</span></td><td style="padding-left:2.700px;padding-top:1px"><span style="letter-spacing:0.15px">JF1-3456789</span></td></tr><tr style="height:19.5px"><td style="padding-top:1.4px">鈴木 亮平</td><td style="padding-top:1.4px"><u>取付あり</u></td><td></td><td class="gapc"></td><td class="rel" style="padding-top:1.4px"></td><td class="gapc"></td><td style="padding:0.8px 0 0 0"><span class="sel2">納車整備中<svg width="6.300" height="4" viewBox="0 0 14 9"><path d="M1.500 1.500 L7 7 L12.500 1.500" fill="none" stroke="#343a40" stroke-width="2.200" stroke-linecap="round" stroke-linejoin="round"/></svg></span></td><td colspan="2"></td></tr><tr class="r4" style="height:23px"><td class="lk" style="padding-top:0.7px" colspan="3">車販編集　取付指示</td><td class="lk"></td><td class="lk" style="padding-top:0.7px">顧客編集</td><td class="lk"></td><td class="lk" style="padding-top:0.7px" colspan="4">車両編集</td></tr></tbody><tbody class="o"><tr class="r1" style="height:23px"><td style="padding-left:1.7px"><span class="sel" style="background:#3478f6">売約済(売上対象)<svg width="6.300" height="4" viewBox="0 0 14 9"><path d="M1.500 1.500 L7 7 L12.500 1.500" fill="none" stroke="#e8e8ff" stroke-width="2.200" stroke-linecap="round" stroke-linejoin="round"/></svg></span></td><td style="padding-top:1.5px"><u>1,561,890円</u></td><td class="rel" style="padding-top:1.5px"><u><span style="letter-spacing:0.18px">0円</span></u><svg class="ic" style="right:1.300px;top:2.8px" width="6.600" height="7.700" viewBox="0 0 13 17"><path d="M0.300 0.500 h3.300 l2.900 5.800 l2.900 -5.800 h3.300 l-3.700 7 h2.300 v1.900 h-3.300 v1.300 h3.300 v1.900 h-3.300 v3.900 h-3 v-3.900 h-3.300 v-1.900 h3.300 v-1.300 h-3.300 v-1.900 h2.300z" fill="#d9363e"/></svg></td><td class="gapc"></td><td class="rel" style="padding-top:1.1px">石田　三成<svg class="ic" style="right:1.700px;top:3.0px" width="11.400" height="9.200" viewBox="0 0 23 18"><rect x="1.300" y="1.300" width="20.400" height="15.400" rx="2.200" fill="none" stroke="#343a40" stroke-width="2.600"/><circle cx="8.300" cy="6.800" r="2.500" fill="#343a40"/><path d="M3.800 14 c0 -2.900 1.900 -4 4.500 -4 s4.500 1.100 4.500 4z" fill="#343a40"/><rect x="14.300" y="5.200" width="4.700" height="1.700" fill="#343a40"/><rect x="14.300" y="8.500" width="4.700" height="1.700" fill="#343a40"/></svg></td><td class="gapc"></td><td class="imgc" rowspan="3"><span class="car" style="top:-1.5px"><svg width="96" height="68" viewBox="0 0 782 554" style="display:block"><rect x="22" y="30" width="700" height="490" fill="#fff"/><g transform="translate(0,11)"><path d="M60 396 C140 436 380 452 500 428 L560 390 L80 376Z" fill="#15181b"/><path d="M44 290 C44 272 50 262 62 252 C100 226 150 200 192 184 C240 146 290 116 332 100 C400 86 500 84 560 94 C610 126 660 180 690 216 C700 250 702 290 696 322 L676 336 L500 404 C470 424 420 436 380 432 L120 406 C90 398 60 382 50 364 C44 340 42 310 44 290Z" fill="#1c8fc8"/><path d="M62 252 C100 226 150 200 192 184 L440 186 C400 220 330 250 260 262 C180 270 100 266 62 252Z" fill="#2397cf"/><path d="M120 222 C160 204 200 192 240 188 L400 190 C360 214 300 232 240 238 C190 240 150 234 120 222Z" fill="#1273a6"/><path d="M50 300 L300 318 L330 340 L380 432 L120 406 C90 398 60 382 50 364Z" fill="#1a86be"/><path d="M470 196 L500 404 L676 336 L692 240 L640 176Z" fill="#1783ba"/><path d="M332 100 C400 86 500 84 560 94 L600 118 L520 110 L334 112Z" fill="#1a242c"/><path d="M198 184 C246 146 292 120 334 110 L524 106 C486 130 462 158 442 188Z" fill="#1e2c36"/><path d="M270 182 C300 152 340 130 372 122 L420 122 C390 142 370 162 356 184Z" fill="#3c5563"/><path d="M490 192 C504 160 524 130 546 116 C572 112 598 114 612 120 C642 140 662 158 674 174 L580 186Z" fill="#1f2c36"/><path d="M594 118 L604 184" stroke="#1c8fc8" stroke-width="7"/><path d="M56 268 C90 286 160 294 220 292 C260 290 290 284 312 276 L320 300 C280 316 220 322 160 318 C110 314 70 304 56 290Z" fill="#14232c"/><path d="M58 296 L200 314 L206 380 L70 358Z" fill="#16242d"/><rect x="84" y="326" width="56" height="34" fill="#e8eaea"/><path d="M296 326 L330 424 L376 430 L340 338Z" fill="#0c5783"/><ellipse cx="432" cy="350" rx="44" ry="75" fill="#202327"/><ellipse cx="429" cy="350" rx="28" ry="55" fill="#8b9096"/><ellipse cx="429" cy="350" rx="10" ry="20" fill="#33373b"/><ellipse cx="672" cy="284" rx="26" ry="47" fill="#202327"/><ellipse cx="670" cy="284" rx="15" ry="30" fill="#8b9096"/></g></svg></span><span class="bd" style="left:66.4px;top:51.8px;width:19.8px;height:11.7px;line-height:12.2px">1枚</span></td><td colspan="3" class="cn" style="padding-left:3px;padding-top:1.0px">トヨタ / プリウスPHV / A / スピリテッドアクアメタリック</td></tr><tr style="height:19px"><td style="padding-top:1.5px">-</td><td style="padding-top:1.5px">-</td><td style="padding-top:1.5px">-</td><td class="gapc"></td><td style="padding-top:1.5px">-</td><td class="gapc"></td><td style="padding-left:3.600px;padding-top:1.5px"><span style="letter-spacing:0.18px">2,000,000円</span></td><td style="padding-left:2.700px;padding-top:1.5px"><span style="letter-spacing:0.27px">島根300さ8934</span></td><td style="padding-left:2.700px;padding-top:1.5px"><span style="letter-spacing:0.15px">L575S-1234567</span></td></tr><tr style="height:24px"><td style="padding-top:2.3px">-</td><td style="padding-top:2.3px"><u>取付あり</u></td><td></td><td class="gapc"></td><td class="rel" style="padding-top:2.3px"></td><td class="gapc"></td><td style="padding:0.8px 0 0 0"><span class="sel2">引渡済<svg width="6.300" height="4" viewBox="0 0 14 9"><path d="M1.500 1.500 L7 7 L12.500 1.500" fill="none" stroke="#343a40" stroke-width="2.200" stroke-linecap="round" stroke-linejoin="round"/></svg></span></td><td colspan="2"></td></tr><tr class="r4" style="height:24px"><td class="lk" style="padding-top:1.4px" colspan="3">車販編集　取付指示</td><td class="lk"></td><td class="lk" style="padding-top:1.4px">顧客編集</td><td class="lk"></td><td class="lk" style="padding-top:1.4px" colspan="4">車両編集</td></tr></tbody></table><div class="red"></div></div></body></html>
